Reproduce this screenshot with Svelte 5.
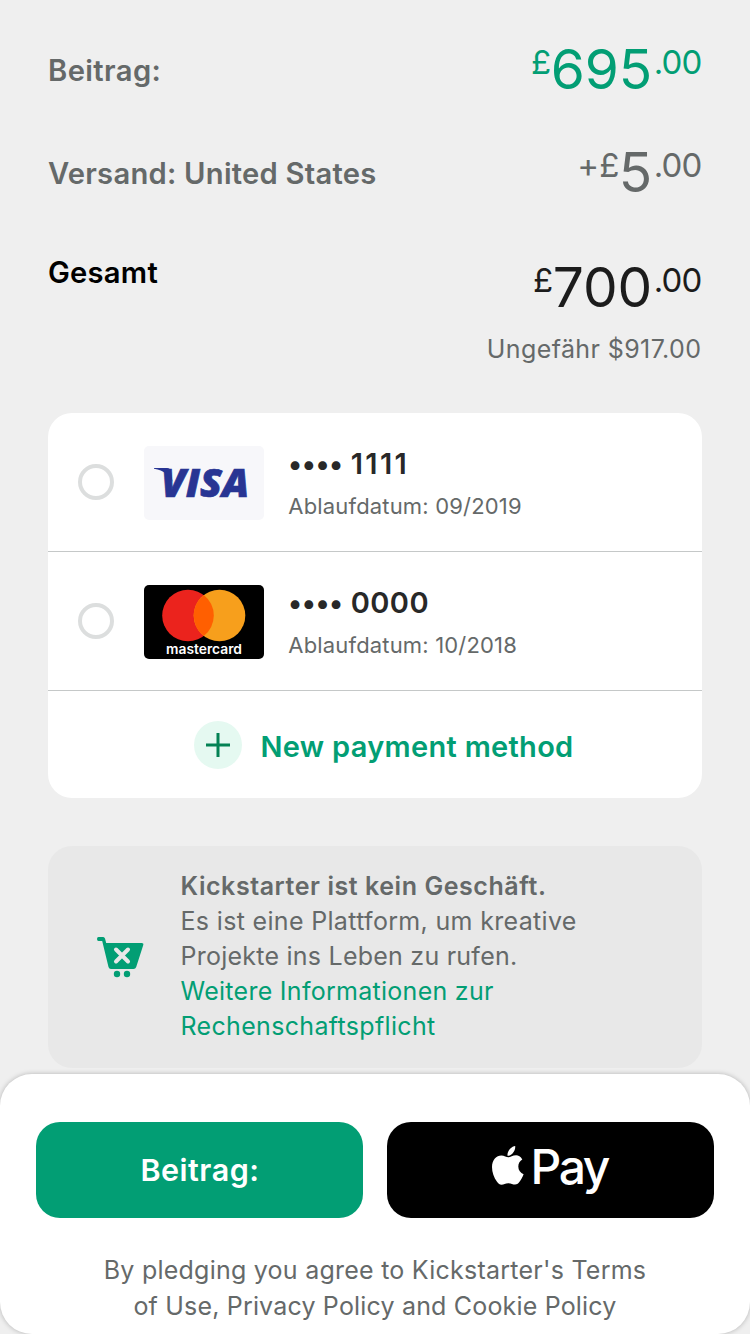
<script>
  const cards = [
    { kind: 'visa', digits: '1111', expiry: '09/2019' },
    { kind: 'mastercard', digits: '0000', expiry: '10/2018' }
  ];
</script>

<div class="page">
  <section class="summary">
    <div class="row first">
      <span class="label l1">Beitrag:</span>
      <span class="amount green"><span class="small">£</span><span class="big">695</span><span class="small cents">.00</span></span>
    </div>
    <div class="row second">
      <span class="label l2">Versand: United States</span>
      <span class="amount grey"><span class="small plus">+</span><span class="small">£</span><span class="big">5</span><span class="small cents">.00</span></span>
    </div>
    <div class="row third">
      <span class="label l3">Gesamt</span>
      <span class="amount dark"><span class="small">£</span><span class="big">700</span><span class="small cents">.00</span></span>
    </div>
    <div class="approx">Ungefähr $917.00</div>
  </section>

  <section class="methods">
    {#each cards as card}
      <div class="method">
        <span class="radio"></span>
        {#if card.kind === 'visa'}
          <svg class="logo" width="120" height="74" viewBox="0 0 120 74">
            <rect width="120" height="74" rx="5" fill="#f7f7fa" />
            <text x="17" y="50.800" textLength="88" lengthAdjust="spacingAndGlyphs" font-family="Open Sans" font-weight="800" font-style="italic" font-size="39.500" fill="#283593" stroke="#283593" stroke-width="0.700">VISA</text>
            <path d="M10 22H23C25.500 22 26.500 23.500 27 26L28.500 36C26 29.500 20 24.500 10 22.800Z" fill="#283593" />
          </svg>
        {:else}
          <svg class="logo" width="120" height="74" viewBox="0 0 120 74">
            <rect width="120" height="74" rx="5" fill="#000" />
            <circle cx="44" cy="30.500" r="25.800" fill="#eb231d" />
            <circle cx="75.500" cy="30.500" r="25.800" fill="#f79f1c" />
            <path d="M59.750 10.070A25.800 25.800 0 0 1 59.750 50.930A25.800 25.800 0 0 1 59.750 10.070Z" fill="#ff5f01" />
            <text x="22" y="69.200" textLength="76" lengthAdjust="spacingAndGlyphs" font-family="Inter" font-weight="600" font-size="13.600" fill="#fff">mastercard</text>
          </svg>
        {/if}
        <div class="details">
          <div class="number"><span class="dots">••••</span><span class="digits" class:ones={card.kind === 'visa'}>{card.digits}</span></div>
          <div class="expiry">Ablaufdatum: {card.expiry}</div>
        </div>
      </div>
    {/each}
    <div class="add">
      <svg width="48" height="48" viewBox="0 0 48 48">
        <circle cx="24" cy="24" r="24" fill="#e5f9f1" />
        <path d="M12 24H36M24 12V36" stroke="#038254" stroke-width="3" fill="none" />
      </svg>
      <span>New payment method</span>
    </div>
  </section>

  <section class="notice">
    <svg width="48" height="42" viewBox="0 0 48 42">
      <path d="M2.500 1H7.200Q8.500 1 9 2.500L10.200 7H45.500Q48 7 47.200 9.300L40.200 31Q39.500 33 37.500 33H15Q13 33 12.500 31L6.200 5H2.500Q1 5 1 3Q1 1 2.500 1Z" fill="#029e74" />
      <circle cx="21" cy="38" r="3.200" fill="#029e74" />
      <circle cx="31" cy="38" r="3.200" fill="#029e74" />
      <path d="M20 13.500L32 25.500M32 13.500L20 25.500" stroke="#e8e8e8" stroke-width="4" stroke-linecap="round" />
    </svg>
    <div class="copy">
      <div class="strong">Kickstarter ist kein Geschäft.</div>
      <div class="c2">Es ist eine Plattform, um kreative</div>
      <div class="c3">Projekte ins Leben zu rufen.</div>
      <div class="link c4">Weitere Informationen zur</div>
      <div class="link c5">Rechenschaftspflicht</div>
    </div>
  </section>

  <footer>
    <div class="buttons">
      <button class="pledge"><span>Beitrag:</span></button>
      <button class="pay" aria-label="Apple Pay">
        <svg width="34" height="42" viewBox="0 0 34 42">
          <path d="M24.200 1C24.500 4 23.300 6.500 21.500 8.400C19.800 10.200 17.700 11 16.500 10.800C16.200 8 17.400 5.600 19.100 3.800C20.700 2.100 22.700 1.100 24.200 1Z" fill="#fff" />
          <path d="M31.300 14.400C29 15.800 27.300 18 27.300 21.400C27.300 25.200 29.500 27.900 32.600 29.200C31.700 32 30.100 34.700 28.300 37.100C26.900 38.900 25.700 39.600 24.100 39.600C21.700 39.600 20.400 38.200 17.300 38.200C14.200 38.200 12.800 39.700 10.500 39.700C8.700 39.700 7.400 38.500 6 36.700C2.900 32.800 1 27.300 1 22.100C1 14.800 5.500 10.500 10.300 10.500C13.300 10.500 15.400 12.300 17.400 12.300C19.300 12.300 21.700 10.300 25.100 10.300C27.300 10.300 29.800 11.400 31.300 14.400Z" fill="#fff" />
        </svg>
        <span>Pay</span>
      </button>
    </div>
    <div class="terms t1">By pledging you agree to Kickstarter's Terms</div>
    <div class="terms t2">of Use, Privacy Policy and Cookie Policy</div>
  </footer>
</div>

<style>
  :global(body) { margin: 0; background: #efefef; }
  .page {
    box-sizing: border-box;
    width: 750px;
    height: 1334px;
    overflow: hidden;
    background: #efefef;
    color: #656969;
    font-family: Inter, sans-serif;
    display: flex;
    flex-direction: column;
  }
  .page div, .page span { white-space: nowrap; }
  .summary { box-sizing: border-box; height: 413px; padding: 36px 48px 0; flex: none; }
  .row { display: flex; justify-content: space-between; align-items: center; height: 66px; }
  .row.second { margin-top: 37px; }
  .row.third { margin-top: 49px; align-items: flex-start; }
  .label { font-size: 29.2px; line-height: 34px; font-weight: 600; padding-top: 3px; letter-spacing: 0.24px; }
  .l1 { letter-spacing: 0.4px; }
  .l3 { color: #000; padding: 2px 0 0; }
  .amount { display: flex; align-items: center; line-height: 66px; }
  .big { font-size: 55px; letter-spacing: 0; margin: 0 1.5px 0 -0.5px; }
  .small { font-size: 33px; line-height: 40px; padding-bottom: 15px; }
  .cents { letter-spacing: -0.9px; margin-right: 0.6px; }
  .green { color: #029e74; }
  .dark { color: #1c1c1c; }
  .approx { text-align: right; font-size: 25px; line-height: 30px; margin-top: 14px; letter-spacing: 0.4px; padding-right: 0.6px; }
  .methods { flex: none; height: 385px; margin: 0 48px; background: #fff; border-radius: 24px; }
  .method { box-sizing: border-box; height: 139px; border-bottom: 1px solid #c5c8c8; display: flex; align-items: center; padding-left: 30px; }
  .radio { box-sizing: border-box; width: 36px; height: 36px; border: 4px solid #dcdede; border-radius: 50%; }
  .logo { margin: 2px 0 0 30px; }
  .details { margin-left: 24px; padding-top: 3px; }
  .number { display: flex; color: #282828; font-weight: 600; font-size: 29px; line-height: 36px; gap: 8px; }
  .dots { font-size: 28px; letter-spacing: -0.4px; }
  .digits { letter-spacing: 0.4px; }
  .ones { letter-spacing: 2.3px; }
  .expiry { font-size: 22px; line-height: 30px; margin-top: 9px; margin-left: 0.3px; letter-spacing: 0.17px; }
  .add { height: 107px; display: flex; align-items: center; padding-left: 146px; color: #029e74; font-size: 29px; font-weight: 600; letter-spacing: 0.3px; }
  .add span { margin-left: 18.5px; padding-top: 3px; }
  .notice { box-sizing: border-box; flex: none; height: 222px; margin: 48px 48px 0; border-radius: 24px; background: #e8e8e8; display: flex; align-items: center; padding-left: 48px; }
  .copy { margin-left: 36.5px; font-size: 25px; line-height: 35px; padding-bottom: 2px; letter-spacing: 0.33px; }
  .copy .strong { font-weight: 600; letter-spacing: 0.56px; }
  .copy .c3 { letter-spacing: 0.24px; }
  .copy .c4 { letter-spacing: 0.28px; }
  .link { color: #029e74; }
  footer { box-sizing: border-box; flex: none; height: 260px; margin-top: 6px; padding: 48px 36px 0; background: #fff; border-radius: 32px; box-shadow: 0 0 5px rgba(0, 0, 0, 0.25); text-align: center; }
  .buttons { display: flex; gap: 24px; margin-bottom: 34px; }
  button { flex: 1; height: 96px; border: 0; padding: 0; border-radius: 24px; background: #029e74; color: #fff; font: 600 30.5px/36px Inter, sans-serif; letter-spacing: 0.5px; display: flex; align-items: center; justify-content: center; }
  .pledge span { padding-left: 1px; }
  .pay { background: #000; font-size: 48px; font-weight: 500; letter-spacing: -2.4px; }
  .pay span { margin-top: -6px; margin-right: 2px; }
  .pay svg { margin-right: 5.500px; margin-top: -8px; }
  .terms { font-size: 25px; line-height: 36px; letter-spacing: 0.24px; }
  .t2 { letter-spacing: 0.18px; }
</style>
